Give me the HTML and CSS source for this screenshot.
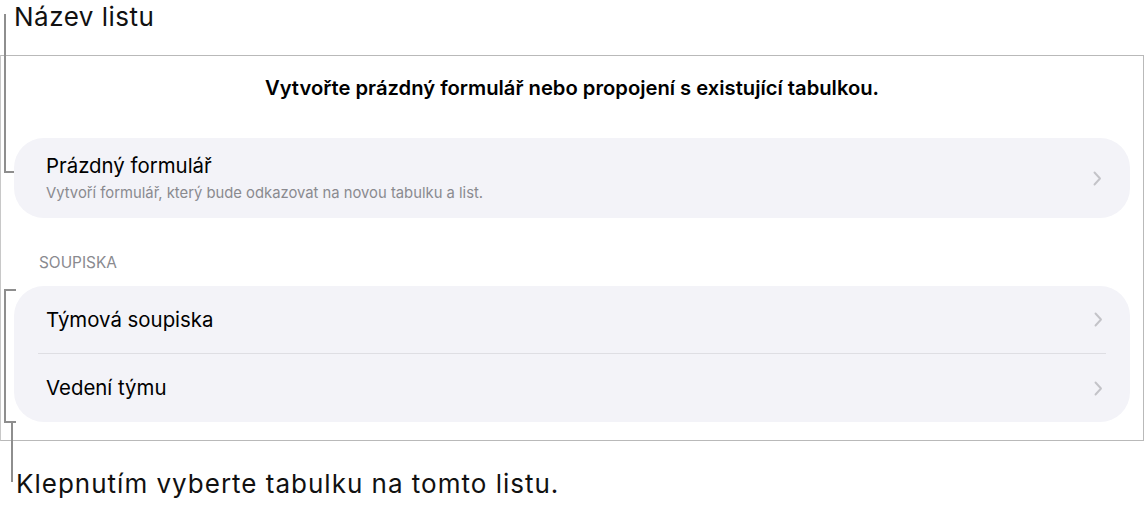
FILE: index.html
```html
<!DOCTYPE html>
<html lang="cs">
<head>
    <meta charset="UTF-8">
    <meta name="viewport" content="width=device-width, initial-scale=1.0">
    <title>Nový formulář</title>
    <link rel="stylesheet" href="styles.css">
</head>
<body>
    <div class="figure">
        <div class="caption caption-top">Název listu</div>

        <div class="screen">
            <h1 class="intro">Vytvořte prázdný formulář nebo propojení s existující tabulkou.</h1>

            <div class="card">
                <div class="row row-blank">
                    <div class="row-text">
                        <div class="row-title">Prázdný formulář</div>
                        <div class="row-sub">Vytvoří formulář, který bude odkazovat na novou tabulku a list.</div>
                    </div>
                    <svg class="chevron" width="9" height="15" viewBox="0 0 9 15"><path d="M1.5 1.5 L7 7.5 L1.5 13.5" fill="none" stroke="currentColor" stroke-width="1.9" stroke-linecap="round" stroke-linejoin="round"/></svg>
                </div>
            </div>

            <div class="section-label">SOUPISKA</div>

            <div class="card">
                <div class="list">
                    <div class="row">
                        <div class="row-title">Týmová soupiska</div>
                        <svg class="chevron" width="9" height="15" viewBox="0 0 9 15"><path d="M1.5 1.5 L7 7.5 L1.5 13.5" fill="none" stroke="currentColor" stroke-width="1.9" stroke-linecap="round" stroke-linejoin="round"/></svg>
                    </div>
                    <div class="row">
                        <div class="row-title">Vedení týmu</div>
                        <svg class="chevron" width="9" height="15" viewBox="0 0 9 15"><path d="M1.5 1.5 L7 7.5 L1.5 13.5" fill="none" stroke="currentColor" stroke-width="1.9" stroke-linecap="round" stroke-linejoin="round"/></svg>
                    </div>
                </div>
            </div>
        </div>

        <div class="caption caption-bottom">Klepnutím vyberte tabulku na tomto listu.</div>

        <!-- callout lines -->
        <div class="leader leader-top"></div>
        <div class="bracket"></div>
        <div class="leader leader-bottom"></div>
    </div>
</body>
</html>
```

FILE: styles.css
```css
body {
    margin: 0;
    background: #fff;
    font-family: Inter, "Noto Sans", Arial, sans-serif;
    color: #000;
}
.figure {
    position: relative;
    width: 1144px;
    height: 508px;
}
.caption {
    font-size: 26px;
    line-height: 34px;
    letter-spacing: 0.5px;
    color: #111;
}
.caption-top {
    padding: 0 0 0 14px;
    height: 55px;
    box-sizing: border-box;
}
.caption-bottom {
    padding: 26px 0 0 16px;
    letter-spacing: 1px;
}
.screen {
    border: 1px solid #b9b9b9;
    border-left-color: #c8c8c8;
    height: 384px;
    padding: 0 13px 0 13px;
}
.intro {
    margin: 0;
    padding-top: 19px;
    text-align: center;
    font-size: 20.2px;
    line-height: 26px;
    font-weight: 600;
}
.card {
    margin-top: 37px;
    background: #f3f3f8;
    border-radius: 30px;
}
.row {
    display: flex;
    align-items: center;
    justify-content: space-between;
}
.row-blank {
    padding: 15px 28px 15px 32px;
}
.row-title {
    font-size: 20.4px;
    line-height: 26px;
}
.row-sub {
    margin-top: 4px;
    font-size: 14.8px;
    line-height: 20px;
    color: #8a8a8f;
}
.chevron {
    color: #c3c3c8;
    flex: none;
}
.section-label {
    margin: 35px 0 13px 25px;
    font-size: 15.4px;
    line-height: 20px;
    color: #8a8a8f;
}
.section-label + .card {
    margin-top: 0;
}
.list {
    margin: 0 24px;
}
.list .row {
    height: 67px;
    padding: 0 3px 0 8px;
}
.list .row + .row {
    border-top: 1px solid #dedee3;
    height: 68px;
}
.leader,
.bracket {
    position: absolute;
    border-color: #8e8e8e;
    border-style: solid;
    border-width: 0;
}
.leader-top {
    left: 4px;
    top: 14px;
    width: 8px;
    height: 157px;
    border-left-width: 2px;
    border-bottom-width: 2px;
}
.bracket {
    left: 4px;
    top: 289px;
    width: 10px;
    height: 130px;
    border-width: 2px 0 2px 2px;
}
.leader-bottom {
    left: 11px;
    top: 421px;
    height: 61px;
    border-left-width: 2px;
}
```
